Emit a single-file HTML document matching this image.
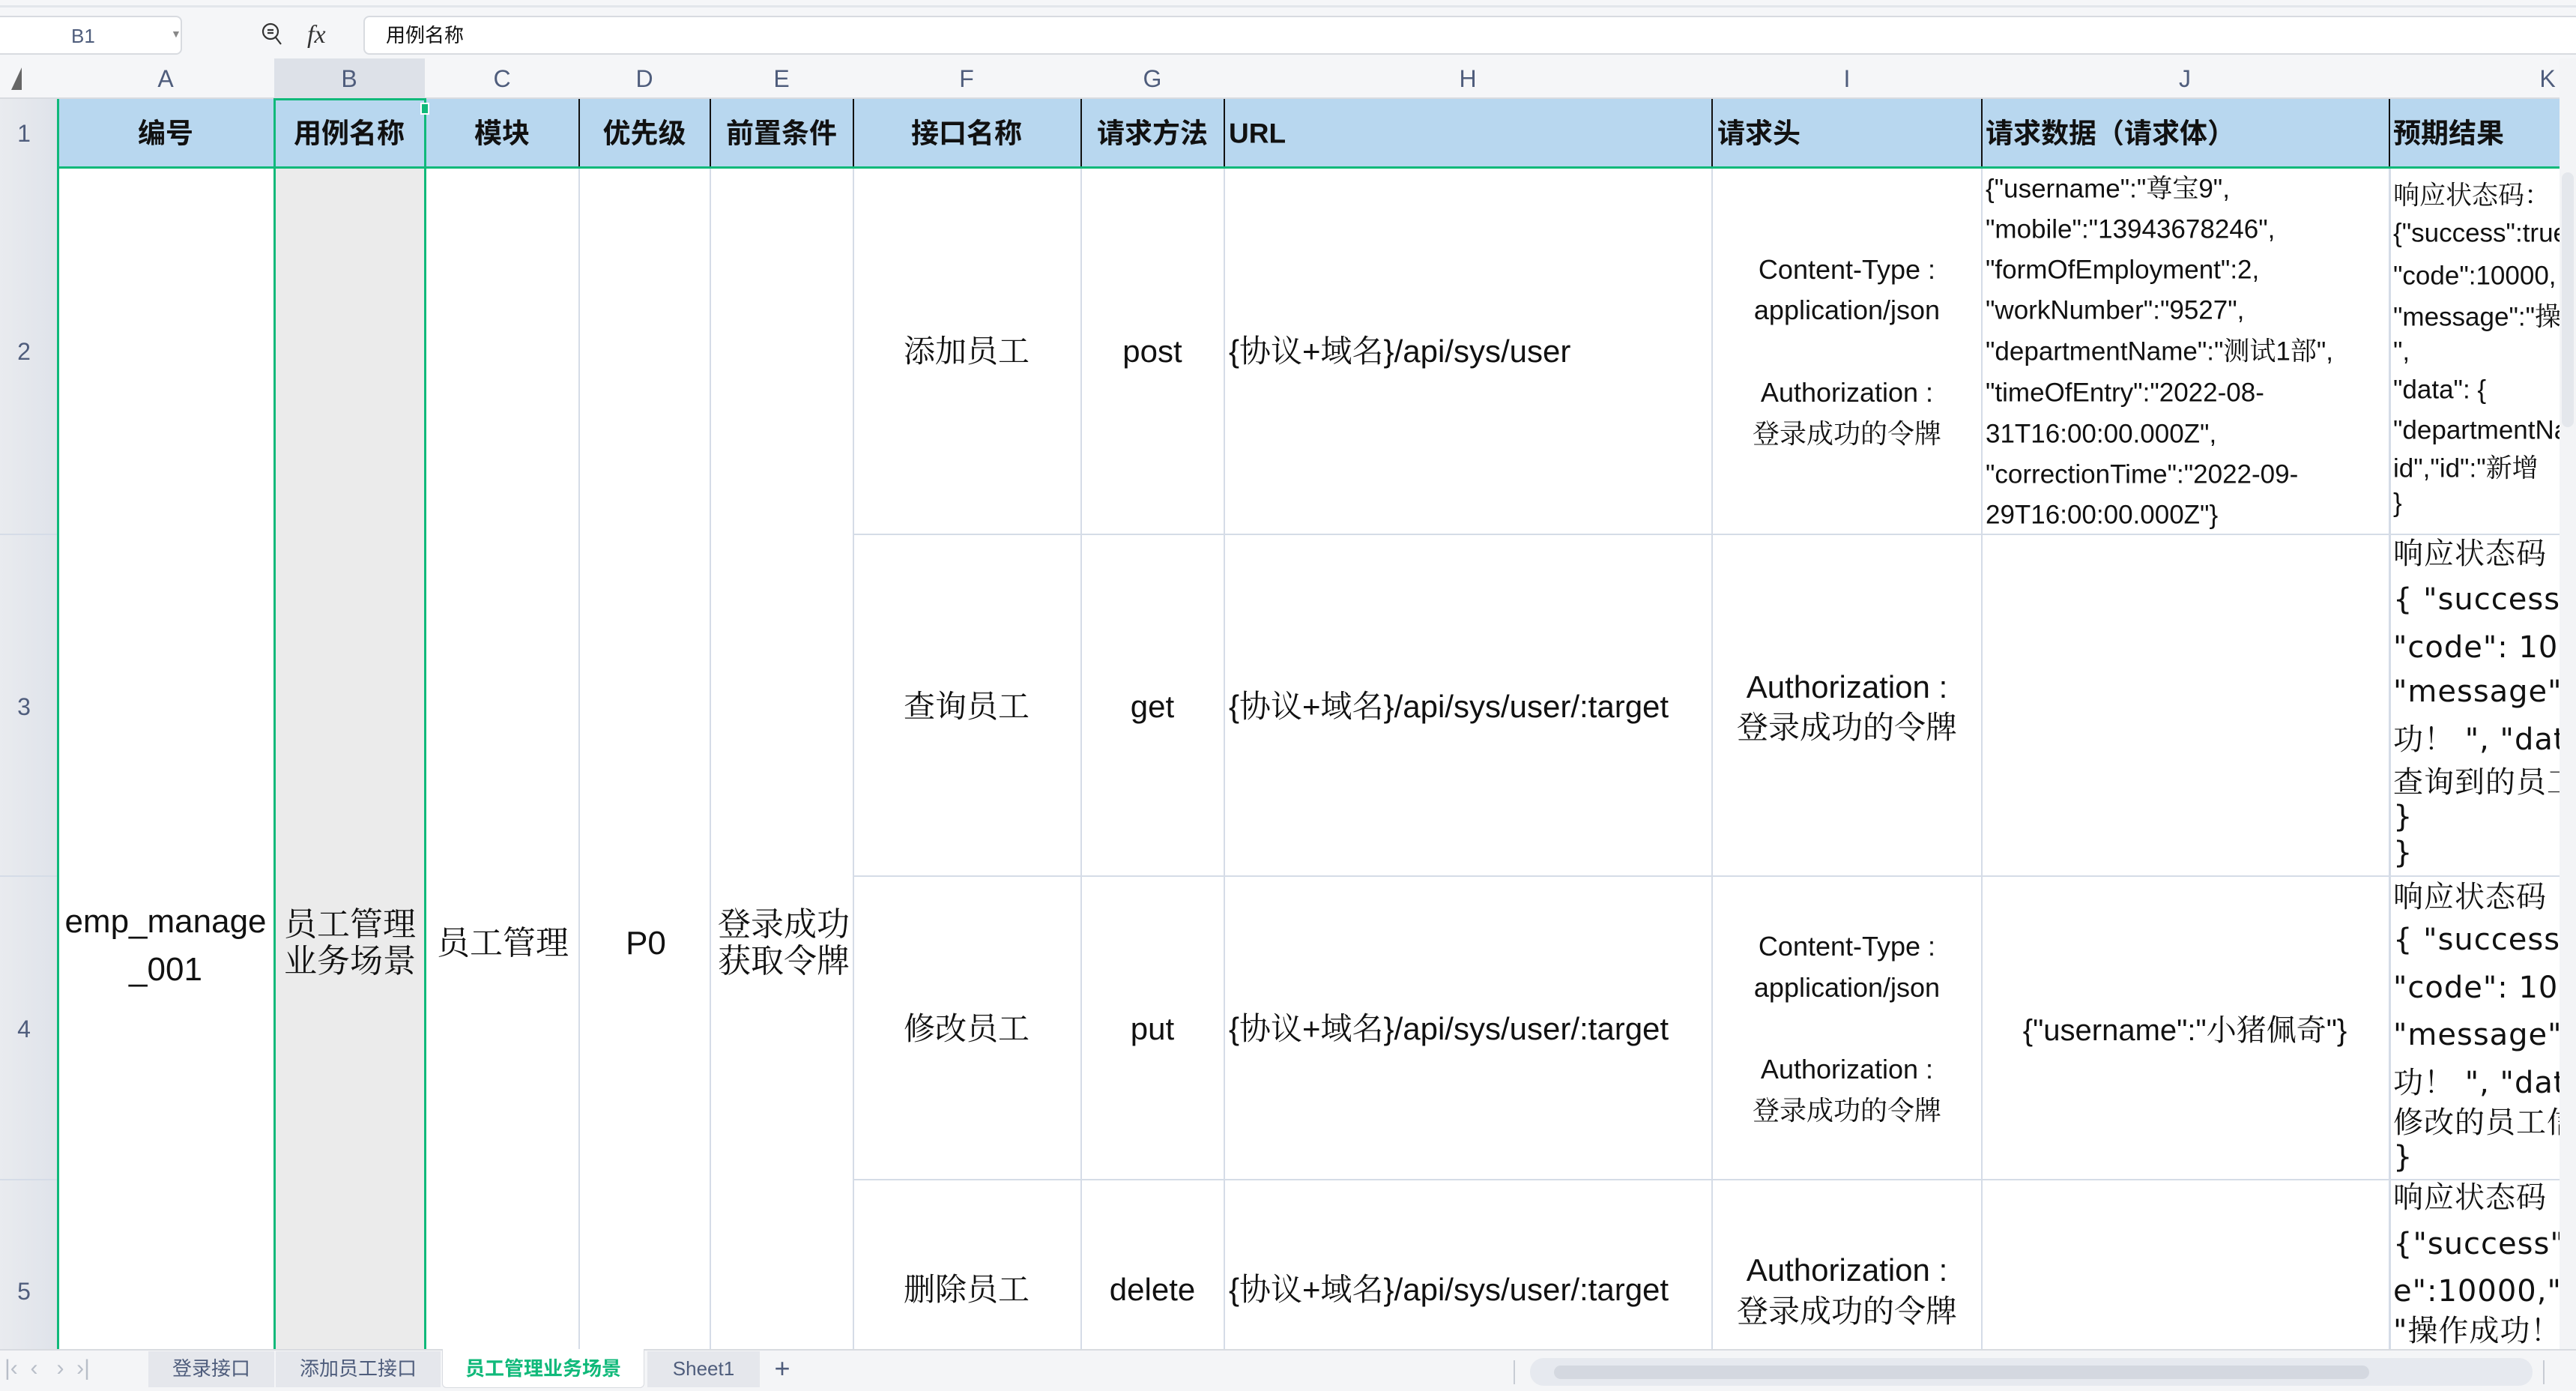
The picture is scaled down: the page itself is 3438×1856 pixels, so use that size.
<!DOCTYPE html>
<html><head><meta charset="utf-8"><style>
*{margin:0;padding:0;box-sizing:border-box}
body{width:3438px;height:1856px;overflow:hidden;background:#fff;position:relative;font-family:"Liberation Sans","Noto Sans CJK SC",sans-serif;color:#111}
.a{position:absolute}
.t{position:absolute;white-space:nowrap;transform:translateY(-50%);line-height:1}
.c{transform:translate(-50%,-50%)}
.s{font-family:"Liberation Sans","Noto Serif CJK SC",serif}
.vl{position:absolute;width:2px;background:#d5dce7}
.hl{position:absolute;height:2px;background:#d5dce7}
.hd{font-weight:bold;font-size:37px;font-family:"Liberation Sans","Noto Sans CJK SC",sans-serif}
.cl{font-size:32px;color:#4f5d7c}
.j{font-size:35px}
.k{font-size:40px;font-family:"DejaVu Sans","Noto Serif CJK SC",serif;letter-spacing:1px}
</style></head><body>
<!-- top toolbar -->
<div class="a" style="left:0;top:0;width:3438px;height:78px;background:#f5f6f8"></div>
<div class="a" style="left:0;top:7px;width:3438px;height:3px;background:#e3e6eb"></div>
<div class="a" style="left:0;top:21px;width:243px;height:52px;background:#fff;border:2px solid #d8dbe0;border-left:none;border-radius:0 8px 8px 0"></div>
<div class="t cl" style="left:95px;top:48px;font-size:26px">B1</div>
<div class="t" style="left:228px;top:45px;font-size:14px;color:#888">▼</div>
<svg class="a" style="left:348px;top:26px" width="30" height="36" viewBox="0 0 30 36"><circle cx="13" cy="16" r="10" fill="none" stroke="#333" stroke-width="2.2"/><path d="M20 24 L27 33 M9 14 H17 M9 18 H17" stroke="#333" stroke-width="2.2"/></svg>
<div class="t" style="left:410px;top:47px;font-size:34px;font-style:italic;font-family:'Liberation Serif',serif;color:#333">fx</div>
<div class="a" style="left:485px;top:21px;width:2960px;height:52px;background:#fff;border:2px solid #d8dbe0;border-radius:8px"></div>
<div class="t" style="left:515px;top:47px;font-size:26px">用例名称</div>
<!-- column header -->
<div class="a" style="left:0;top:78px;width:3416px;height:54px;background:#f5f6f8;border-bottom:2px solid #d8dbe0"></div>
<div class="a" style="left:366px;top:78px;width:201px;height:54px;background:#dde1e8"></div>
<svg class="a" style="left:15px;top:90px" width="14" height="30"><path d="M14 0 V30 H0 Z" fill="#666"/></svg>
<div class="t cl c" style="left:221px;top:105px">A</div>
<div class="t cl c" style="left:466px;top:105px">B</div>
<div class="t cl c" style="left:670px;top:105px">C</div>
<div class="t cl c" style="left:860px;top:105px">D</div>
<div class="t cl c" style="left:1043px;top:105px">E</div>
<div class="t cl c" style="left:1290px;top:105px">F</div>
<div class="t cl c" style="left:1538px;top:105px">G</div>
<div class="t cl c" style="left:1959px;top:105px">H</div>
<div class="t cl c" style="left:2465px;top:105px">I</div>
<div class="t cl c" style="left:2916px;top:105px">J</div>
<div class="t cl c" style="left:3400px;top:105px">K</div>
<!-- row header -->
<div class="a" style="left:0;top:132px;width:77px;height:1670px;background:linear-gradient(90deg,#e9ebef,#dfe3ea)"></div>
<div class="t cl c" style="left:32px;top:178px">1</div>
<div class="t cl c" style="left:32px;top:469px">2</div>
<div class="t cl c" style="left:32px;top:943px">3</div>
<div class="t cl c" style="left:32px;top:1373px">4</div>
<div class="t cl c" style="left:32px;top:1723px">5</div>
<div class="hl" style="left:0;top:712px;width:77px"></div>
<div class="hl" style="left:0;top:1168px;width:77px"></div>
<div class="hl" style="left:0;top:1573px;width:77px"></div>
<!-- header row -->
<div class="a" style="left:77px;top:132px;width:3339px;height:90px;background:#b8d7ef"></div>
<div class="a" style="left:366px;top:222px;width:201px;height:1580px;background:#ebebeb"></div>
<div class="a" style="left:772px;top:132px;width:2px;height:90px;background:#111"></div>
<div class="a" style="left:947px;top:132px;width:2px;height:90px;background:#111"></div>
<div class="a" style="left:1138px;top:132px;width:2px;height:90px;background:#111"></div>
<div class="a" style="left:1442px;top:132px;width:2px;height:90px;background:#111"></div>
<div class="a" style="left:1633px;top:132px;width:2px;height:90px;background:#111"></div>
<div class="a" style="left:2284px;top:132px;width:2px;height:90px;background:#111"></div>
<div class="a" style="left:2644px;top:132px;width:2px;height:90px;background:#111"></div>
<div class="a" style="left:3188px;top:132px;width:2px;height:90px;background:#111"></div>
<!-- body grid -->
<div class="vl" style="left:772px;top:222px;height:1580px"></div>
<div class="vl" style="left:947px;top:222px;height:1580px"></div>
<div class="vl" style="left:1138px;top:222px;height:1580px"></div>
<div class="vl" style="left:1442px;top:222px;height:1580px"></div>
<div class="vl" style="left:1633px;top:222px;height:1580px"></div>
<div class="vl" style="left:2284px;top:222px;height:1580px"></div>
<div class="vl" style="left:2644px;top:222px;height:1580px"></div>
<div class="vl" style="left:3188px;top:222px;height:1580px;width:3px"></div>
<div class="hl" style="left:1138px;top:712px;width:2278px"></div>
<div class="hl" style="left:1138px;top:1168px;width:2278px"></div>
<div class="hl" style="left:1138px;top:1573px;width:2278px"></div>
<!-- green selection -->
<div class="a" style="left:76px;top:222px;width:3340px;height:3px;background:#10b97a"></div>
<div class="a" style="left:76px;top:132px;width:3px;height:1670px;background:#10b97a"></div>
<div class="a" style="left:365px;top:132px;width:3px;height:1670px;background:#10b97a"></div>
<div class="a" style="left:566px;top:132px;width:3px;height:1670px;background:#10b97a"></div>
<div class="a" style="left:365px;top:131px;width:204px;height:3px;background:#10b97a"></div>
<div class="a" style="left:561px;top:137px;width:12px;height:16px;background:#10b97a;border:2px solid #fff"></div>
<!-- header text -->
<div class="t hd c" style="left:221px;top:178px">编号</div>
<div class="t hd c" style="left:466px;top:178px">用例名称</div>
<div class="t hd c" style="left:670px;top:178px">模块</div>
<div class="t hd c" style="left:860px;top:178px">优先级</div>
<div class="t hd c" style="left:1043px;top:178px">前置条件</div>
<div class="t hd c" style="left:1290px;top:178px">接口名称</div>
<div class="t hd c" style="left:1538px;top:178px">请求方法</div>
<div class="t hd" style="left:1640px;top:178px">URL</div>
<div class="t hd" style="left:2292px;top:178px">请求头</div>
<div class="t hd" style="left:2650px;top:178px">请求数据（请求体）</div>
<div class="t hd" style="left:3194px;top:178px">预期结果</div>
<!-- merged cells -->
<div class="t s c" style="left:221px;top:1230px;font-size:44px">emp_manage</div>
<div class="t s c" style="left:221px;top:1294px;font-size:44px">_001</div>
<div class="t s" style="left:379px;top:1234px;font-size:44px">员工管理</div>
<div class="t s" style="left:379px;top:1283px;font-size:44px">业务场景</div>
<div class="t s" style="left:583px;top:1259px;font-size:44px">员工管理</div>
<div class="t s c" style="left:862px;top:1259px;font-size:44px">P0</div>
<div class="t s" style="left:958px;top:1234px;font-size:44px">登录成功</div>
<div class="t s" style="left:958px;top:1283px;font-size:44px">获取令牌</div>
<!-- F G H -->
<div class="t s c" style="left:1290px;top:469px;font-size:42px">添加员工</div>
<div class="t s c" style="left:1538px;top:469px;font-size:42px">post</div>
<div class="t s" style="left:1640px;top:469px;font-size:42px">{协议+域名}/api/sys/user</div>
<div class="t s c" style="left:1290px;top:943px;font-size:42px">查询员工</div>
<div class="t s c" style="left:1538px;top:943px;font-size:42px">get</div>
<div class="t s" style="left:1640px;top:943px;font-size:42px">{协议+域名}/api/sys/user/:target</div>
<div class="t s c" style="left:1290px;top:1373px;font-size:42px">修改员工</div>
<div class="t s c" style="left:1538px;top:1373px;font-size:42px">put</div>
<div class="t s" style="left:1640px;top:1373px;font-size:42px">{协议+域名}/api/sys/user/:target</div>
<div class="t s c" style="left:1290px;top:1721px;font-size:42px">删除员工</div>
<div class="t s c" style="left:1538px;top:1721px;font-size:42px">delete</div>
<div class="t s" style="left:1640px;top:1721px;font-size:42px">{协议+域名}/api/sys/user/:target</div>
<!-- I -->
<div class="t s c" style="left:2465px;top:360px;font-size:36px">Content-Type :</div>
<div class="t s c" style="left:2465px;top:414px;font-size:36px">application/json</div>
<div class="t s c" style="left:2465px;top:524px;font-size:36px">Authorization :</div>
<div class="t s c" style="left:2465px;top:579px;font-size:36px">登录成功的令牌</div>
<div class="t s c" style="left:2465px;top:917px;font-size:42px">Authorization :</div>
<div class="t s c" style="left:2465px;top:971px;font-size:42px">登录成功的令牌</div>
<div class="t s c" style="left:2465px;top:1263px;font-size:36px">Content-Type :</div>
<div class="t s c" style="left:2465px;top:1318px;font-size:36px">application/json</div>
<div class="t s c" style="left:2465px;top:1427px;font-size:36px">Authorization :</div>
<div class="t s c" style="left:2465px;top:1482px;font-size:36px">登录成功的令牌</div>
<div class="t s c" style="left:2465px;top:1695px;font-size:42px">Authorization :</div>
<div class="t s c" style="left:2465px;top:1750px;font-size:42px">登录成功的令牌</div>
<!-- J -->
<div class="t s j" style="left:2650px;top:252px">{"username":"尊宝9",</div>
<div class="t s j" style="left:2650px;top:306px">"mobile":"13943678246",</div>
<div class="t s j" style="left:2650px;top:360px">"formOfEmployment":2,</div>
<div class="t s j" style="left:2650px;top:414px">"workNumber":"9527",</div>
<div class="t s j" style="left:2650px;top:469px">"departmentName":"测试1部",</div>
<div class="t s j" style="left:2650px;top:524px">"timeOfEntry":"2022-08-</div>
<div class="t s j" style="left:2650px;top:579px">31T16:00:00.000Z",</div>
<div class="t s j" style="left:2650px;top:633px">"correctionTime":"2022-09-</div>
<div class="t s j" style="left:2650px;top:687px">29T16:00:00.000Z"}</div>
<div class="t s c" style="left:2916px;top:1375px;font-size:40px">{"username":"小猪佩奇"}</div>
<!-- K -->
<div class="a" style="left:3190px;top:224px;width:226px;height:1576px;overflow:hidden">
<div style="position:relative;top:-224px">
<div class="t s j" style="left:4px;top:261px">响应状态码：</div>
<div class="t s j" style="left:4px;top:311px">{"success":true,</div>
<div class="t s j" style="left:4px;top:368px">"code":10000,</div>
<div class="t s j" style="left:4px;top:423px">"message":"操作成功！</div>
<div class="t s j" style="left:4px;top:469px">",</div>
<div class="t s j" style="left:4px;top:520px">"data": {</div>
<div class="t s j" style="left:4px;top:574px">"departmentName":</div>
<div class="t s j" style="left:4px;top:625px">id","id":"新增</div>
<div class="t s j" style="left:4px;top:671px">}</div>
<div class="t k" style="left:4px;top:739px">响应状态码</div>
<div class="t k" style="left:4px;top:800px">{ "success":</div>
<div class="t k" style="left:4px;top:864px">"code": 10000</div>
<div class="t k" style="left:4px;top:923px">"message":"成</div>
<div class="t k" style="left:4px;top:987px">功！ ", "data</div>
<div class="t k" style="left:4px;top:1044px">查询到的员工</div>
<div class="t k" style="left:4px;top:1090px">}</div>
<div class="t k" style="left:4px;top:1138px">}</div>
<div class="t k" style="left:4px;top:1197px">响应状态码</div>
<div class="t k" style="left:4px;top:1254px">{ "success":</div>
<div class="t k" style="left:4px;top:1318px">"code": 10000</div>
<div class="t k" style="left:4px;top:1381px">"message":"成</div>
<div class="t k" style="left:4px;top:1445px">功！ ", "data</div>
<div class="t k" style="left:4px;top:1498px">修改的员工信</div>
<div class="t k" style="left:4px;top:1544px">}</div>
<div class="t k" style="left:4px;top:1598px">响应状态码</div>
<div class="t k" style="left:4px;top:1660px">{"success":tr</div>
<div class="t k" style="left:4px;top:1723px">e":10000,"m</div>
<div class="t k" style="left:4px;top:1776px">"操作成功！</div>
</div></div>
<!-- vertical scrollbar -->
<div class="a" style="left:3416px;top:78px;width:22px;height:1724px;background:#f3f4f6"></div>
<div class="a" style="left:3419px;top:230px;width:16px;height:340px;background:#e4e7ec;border-radius:8px"></div>
<!-- tab bar -->
<div class="a" style="left:0;top:1800px;width:3438px;height:56px;background:#f4f5f7;border-top:2px solid #d8dbe0"></div>
<div class="t" style="left:6px;top:1826px;font-size:30px;color:#b8bec8">|&lsaquo;&nbsp;&nbsp;&lsaquo;&nbsp;&nbsp;&nbsp;&rsaquo;&nbsp;&nbsp;&rsaquo;|</div>
<div class="a" style="left:198px;top:1803px;width:168px;height:48px;background:#e5e7ec"></div>
<div class="t c" style="left:282px;top:1826px;font-size:26px;color:#4f5d7c">登录接口</div>
<div class="a" style="left:368px;top:1803px;width:220px;height:48px;background:#e5e7ec"></div>
<div class="t c" style="left:478px;top:1826px;font-size:26px;color:#4f5d7c">添加员工接口</div>
<div class="a" style="left:590px;top:1800px;width:270px;height:52px;background:#fff;border:1px solid #d8dbe0;border-top:none;border-radius:0 0 6px 6px"></div>
<div class="t c" style="left:725px;top:1826px;font-size:26px;color:#10b97a;font-weight:bold">员工管理业务场景</div>
<div class="a" style="left:864px;top:1803px;width:150px;height:48px;background:#e5e7ec"></div>
<div class="t c" style="left:939px;top:1826px;font-size:26px;color:#4f5d7c">Sheet1</div>
<div class="t c" style="left:1044px;top:1826px;font-size:36px;color:#4f5d7c">+</div>
<!-- horizontal scrollbar -->
<div class="a" style="left:2020px;top:1815px;width:2px;height:32px;background:#c8ccd4"></div>
<div class="a" style="left:2042px;top:1812px;width:1338px;height:37px;background:#e6e9ef;border-radius:18px"></div>
<div class="a" style="left:2074px;top:1822px;width:1088px;height:18px;background:#d4d8e0;border-radius:9px"></div>
<div class="a" style="left:3394px;top:1815px;width:2px;height:32px;background:#c8ccd4"></div>
</body></html>
